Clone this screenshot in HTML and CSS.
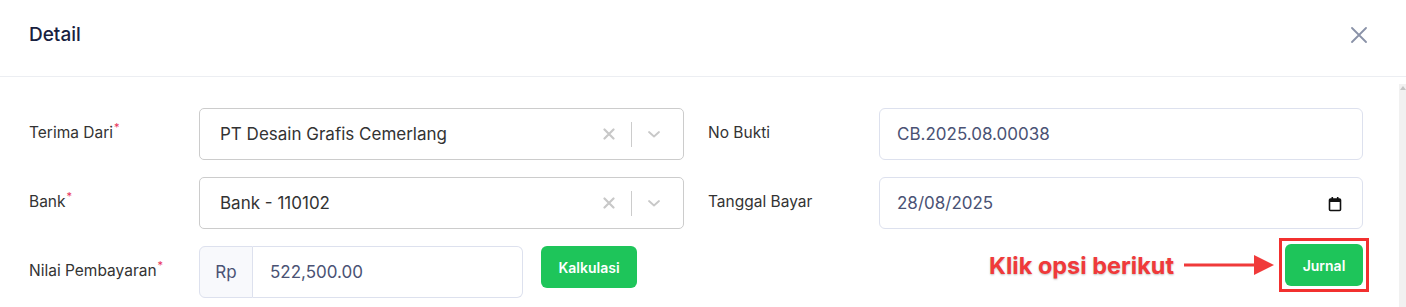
FILE: index.html
```html
<!DOCTYPE html>
<html lang="id">
<head>
<meta charset="utf-8">
<title>Detail</title>
<link rel="stylesheet" href="styles.css">
</head>
<body>
<div class="modal">
  <header class="modal-header">
    <h1 class="modal-title">Detail</h1>
    <button class="close-btn" aria-label="Tutup">
      <svg width="16" height="16" viewBox="0 0 16 16"><path d="M1 1L15 15M15 1L1 15" stroke="#8a92a8" stroke-width="1.8" stroke-linecap="round"/></svg>
    </button>
  </header>
  <div class="modal-main">
    <div class="modal-body">
      <div class="form-grid">
        <div class="col">
          <div class="field">
            <label class="label">Terima Dari<span class="req">*</span></label>
            <div class="select">
              <span class="select-value">PT Desain Grafis Cemerlang</span>
              <span class="indicators">
                <span class="ind">
                  <svg width="12" height="12" viewBox="0 0 12 12"><path d="M1.5 1.5L10.5 10.5M10.5 1.5L1.5 10.5" stroke="#c8c8c8" stroke-width="2.2" stroke-linecap="round"/></svg>
                </span>
                <span class="sep"></span>
                <span class="ind">
                  <svg width="14" height="14" viewBox="0 0 14 14"><path d="M2 5L7 9.5L12 5" fill="none" stroke="#c8c8c8" stroke-width="1.8" stroke-linecap="round" stroke-linejoin="round"/></svg>
                </span>
              </span>
            </div>
          </div>
          <div class="field">
            <label class="label">Bank<span class="req">*</span></label>
            <div class="select">
              <span class="select-value">Bank - 110102</span>
              <span class="indicators">
                <span class="ind">
                  <svg width="12" height="12" viewBox="0 0 12 12"><path d="M1.5 1.5L10.5 10.5M10.5 1.5L1.5 10.5" stroke="#c8c8c8" stroke-width="2.2" stroke-linecap="round"/></svg>
                </span>
                <span class="sep"></span>
                <span class="ind">
                  <svg width="14" height="14" viewBox="0 0 14 14"><path d="M2 5L7 9.5L12 5" fill="none" stroke="#c8c8c8" stroke-width="1.8" stroke-linecap="round" stroke-linejoin="round"/></svg>
                </span>
              </span>
            </div>
          </div>
          <div class="field">
            <label class="label">Nilai Pembayaran<span class="req">*</span></label>
            <div class="amount-row">
              <div class="input-group">
                <span class="addon">Rp</span>
                <span class="input grouped">522,500.00</span>
              </div>
              <button class="btn-green btn-kalk">Kalkulasi</button>
            </div>
          </div>
        </div>
        <div class="col">
          <div class="field">
            <label class="label">No Bukti</label>
            <span class="input">CB.2025.08.00038</span>
          </div>
          <div class="field">
            <label class="label">Tanggal Bayar</label>
            <span class="input date">
              <span>28/08/2025</span>
              <svg class="cal" width="14" height="16" viewBox="0 0 14 16"><rect x="1.5" y="3" width="11" height="11.5" rx="1" fill="none" stroke="#111" stroke-width="1.6"/><rect x="1.5" y="3" width="11" height="3" fill="#111"/><rect x="3.5" y="1" width="1.6" height="3" fill="#111"/><rect x="8.9" y="1" width="1.6" height="3" fill="#111"/></svg>
            </span>
          </div>
          <div class="action-row">
            <span class="hint">Klik opsi berikut</span>
            <svg class="arrow" width="90" height="22" viewBox="0 0 90 22"><rect x="0" y="9.5" width="72" height="3" fill="#f03a3a"/><path d="M70 1L90 11L70 21Z" fill="#f03a3a"/></svg>
            <span class="highlight"><button class="btn-green btn-jurnal">Jurnal</button></span>
          </div>
        </div>
      </div>
    </div>
    <div class="scrollbar"><span class="scroll-up"></span></div>
  </div>
</div>
</body>
</html>
```
FILE: styles.css
```css
* { box-sizing: border-box; }
html, body { margin: 0; padding: 0; background: #fff; }
body {
  font-family: Inter, "Noto Sans", "Liberation Sans", sans-serif;
  color: #333;
  width: 1406px;
  height: 307px;
  overflow: hidden;
}
.modal { display: flex; flex-direction: column; height: 307px; }
.modal-header {
  height: 77px;
  flex: 0 0 auto;
  display: flex;
  align-items: center;
  justify-content: space-between;
  padding: 0 39px 0 29px;
  border-bottom: 1px solid #eceef2;
}
.modal-title {
  margin: 0;
  font-size: 19px;
  font-weight: 500;
  color: #18213f;
  padding-bottom: 7px;
}
.close-btn {
  border: 0;
  background: none;
  padding: 0;
  display: flex;
  margin-bottom: 7px;
}
.modal-main { flex: 1; display: flex; min-height: 0; }
.modal-body { flex: 1; padding: 31px 36px 0 29px; }
.scrollbar {
  width: 7px;
  margin-top: 7px;
  background: #f1f1f1;
  display: flex;
  justify-content: center;
}
.scroll-up {
  width: 0; height: 0;
  margin-top: 2px;
  border-left: 3px solid transparent;
  border-right: 3px solid transparent;
  border-bottom: 4px solid #c4c4c4;
}
.form-grid {
  display: grid;
  grid-template-columns: 1fr 1fr;
  column-gap: 24px;
}
.col { display: flex; flex-direction: column; gap: 17px; }
.field { display: flex; align-items: center; height: 52px; }
.label {
  width: 170px;
  flex: 0 0 170px;
  font-size: 15.5px;
  color: #333;
  align-self: flex-start;
  padding-top: 15px;
}
.col + .col .label { width: 171px; flex-basis: 171px; }
.req { color: #e8305a; font-size: 11px; vertical-align: top; position: relative; top: -3px; margin-left: 1px; }
.select {
  flex: 1;
  height: 52px;
  border: 1px solid #cccccc;
  border-radius: 5px;
  display: flex;
  align-items: center;
  padding-left: 20px;
}
.select-value { flex: 1; font-size: 17px; color: #333; }
.indicators { display: flex; align-items: center; padding-right: 22px; }
.ind { display: flex; }
.sep { width: 1px; height: 25px; background: #cccccc; margin: 0 15px 0 16px; }
.input {
  flex: 1;
  height: 52px;
  border: 1px solid #dde1ee;
  border-radius: 6px;
  display: flex;
  align-items: center;
  padding-left: 17px;
  font-size: 17px;
  color: #4a5274;
}
.date { justify-content: space-between; padding-right: 20px; }
.cal { margin-top: 1px; }
.amount-row { flex: 1; display: flex; align-items: flex-start; gap: 18px; height: 52px; }
.input-group { display: flex; width: 324px; height: 52px; }
.addon {
  width: 54px;
  height: 52px;
  display: flex;
  align-items: center;
  justify-content: center;
  background: #f8f9fc;
  border: 1px solid #dde1ee;
  border-radius: 6px 0 0 6px;
  font-size: 17px;
  color: #4a5274;
}
.input.grouped { border-left: 0; border-radius: 0 6px 6px 0; }
.btn-green {
  border: 0;
  background: #1ec55a;
  color: #fff;
  font-family: inherit;
  font-weight: 600;
  font-size: 14px;
  border-radius: 6px;
  height: 42px;
}
.btn-kalk { width: 96px; }
.action-row {
  display: flex;
  align-items: center;
  justify-content: flex-end;
  height: 52px;
  margin-top: -2px;
}
.hint {
  color: #f03a3a;
  font-size: 23.5px;
  font-weight: 700;
  text-shadow: 0 1px 2px rgba(0,0,0,0.25);
  margin-right: 10px;
  margin-top: -10px;
}
.arrow { margin-right: 5px; margin-top: -10px; }
.highlight {
  display: flex;
  border: 3px solid #f2302f;
  padding: 3px;
  margin-right: -6px;
  margin-top: -10px;
}
.btn-jurnal { width: 78px; }
```
